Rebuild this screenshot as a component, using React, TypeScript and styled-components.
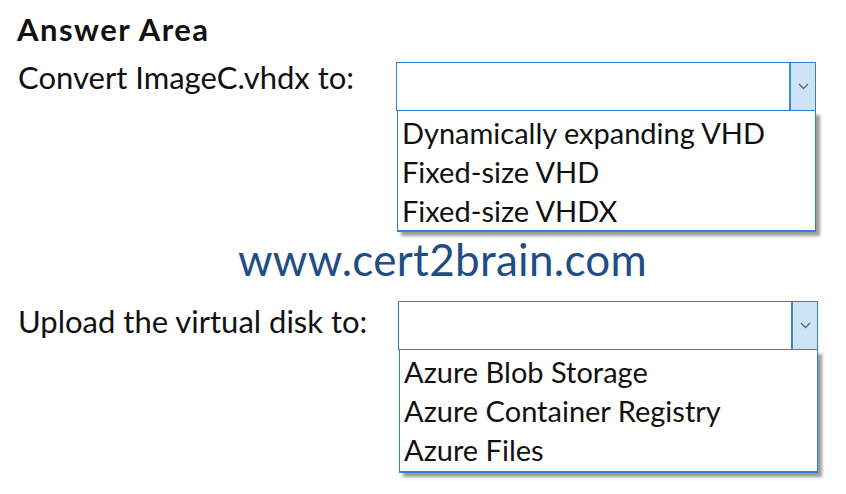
import React from 'react'
import styled, { createGlobalStyle } from 'styled-components'

const GlobalStyle = createGlobalStyle`
  html, body {
    margin: 0;
    padding: 0;
    background: #ffffff;
  }
  body {
    font-family: Lato, "Liberation Sans", sans-serif;
    color: #111111;
  }
`

const Page = styled.div`
  width: 846px;
  height: 494px;
  padding: 11px 0 0 17px;
  box-sizing: border-box;
  overflow: hidden;
`

const Title = styled.h1`
  margin: 0;
  font-size: 31px;
  font-weight: 700;
  letter-spacing: 1.5px;
  line-height: 36px;
  color: #111;
`

const Row = styled.div<{ $top: number; $labelWidth: number }>`
  display: grid;
  grid-template-columns: ${p => p.$labelWidth}px 420px;
  margin-top: ${p => p.$top}px;
`

const Label = styled.div<{ $offset: number }>`
  font-size: 31px;
  line-height: 30px;
  padding: ${p => p.$offset}px 0 0 1px;
  white-space: nowrap;
`

const Dropdown = styled.div`
  display: flex;
  flex-direction: column;
`

const SelectBox = styled.div`
  height: 49px;
  box-sizing: border-box;
  border: 1px solid #2f80d8;
  display: flex;
  justify-content: flex-end;
  background: #fff;
`

const ArrowButton = styled.div`
  width: 24px;
  background: #cde4f7;
  border-left: 2px solid #3c86d6;
  display: flex;
  align-items: center;
  justify-content: center;
`

const OptionList = styled.ul<{ $bottom: number }>`
  list-style: none;
  margin: 0 0 0 1px;
  padding: 2px 0 ${p => p.$bottom}px 4px;
  border: 1px solid #2f80d8;
  border-top: none;
  border-bottom-width: 2px;
  box-shadow: 4px 4px 3px rgba(0, 0, 0, 0.4);
  background: #fff;
`

const Option = styled.li`
  font-size: 29px;
  line-height: 39px;
  white-space: nowrap;
`

const Watermark = styled.div`
  padding-left: 221px;
  margin-top: 5px;
  font-size: 44px;
  letter-spacing: 0.3px;
  line-height: 44px;
  color: #1f4d85;
`

const Chevron = () => (
  <svg width="11" height="7" viewBox="0 0 11 7">
    <path d="M1 1 L5.5 5.5 L10 1" fill="none" stroke="#5f646c" strokeWidth="1.3" />
  </svg>
)

const Select: React.FC<{ options: string[]; bottom: number }> = ({ options, bottom }) => (
  <Dropdown>
    <SelectBox>
      <ArrowButton>
        <Chevron />
      </ArrowButton>
    </SelectBox>
    <OptionList $bottom={bottom}>
      {options.map(o => (
        <Option key={o}>{o}</Option>
      ))}
    </OptionList>
  </Dropdown>
)

const App: React.FC = () => {
  return (
    <>
      <GlobalStyle />
      <Page>
        <Title>Answer Area</Title>
        <Row $top={15} $labelWidth={379}>
          <Label $offset={0}>Convert ImageC.vhdx to:</Label>
          <Select
            bottom={0}
            options={['Dynamically expanding VHD', 'Fixed-size VHD', 'Fixed-size VHDX']}
          />
        </Row>
        <Watermark>www.cert2brain.com</Watermark>
        <Row $top={20} $labelWidth={381}>
          <Label $offset={5}>Upload the virtual disk to:</Label>
          <Select
            bottom={2}
            options={['Azure Blob Storage', 'Azure Container Registry', 'Azure Files']}
          />
        </Row>
      </Page>
    </>
  )
}

export default App
